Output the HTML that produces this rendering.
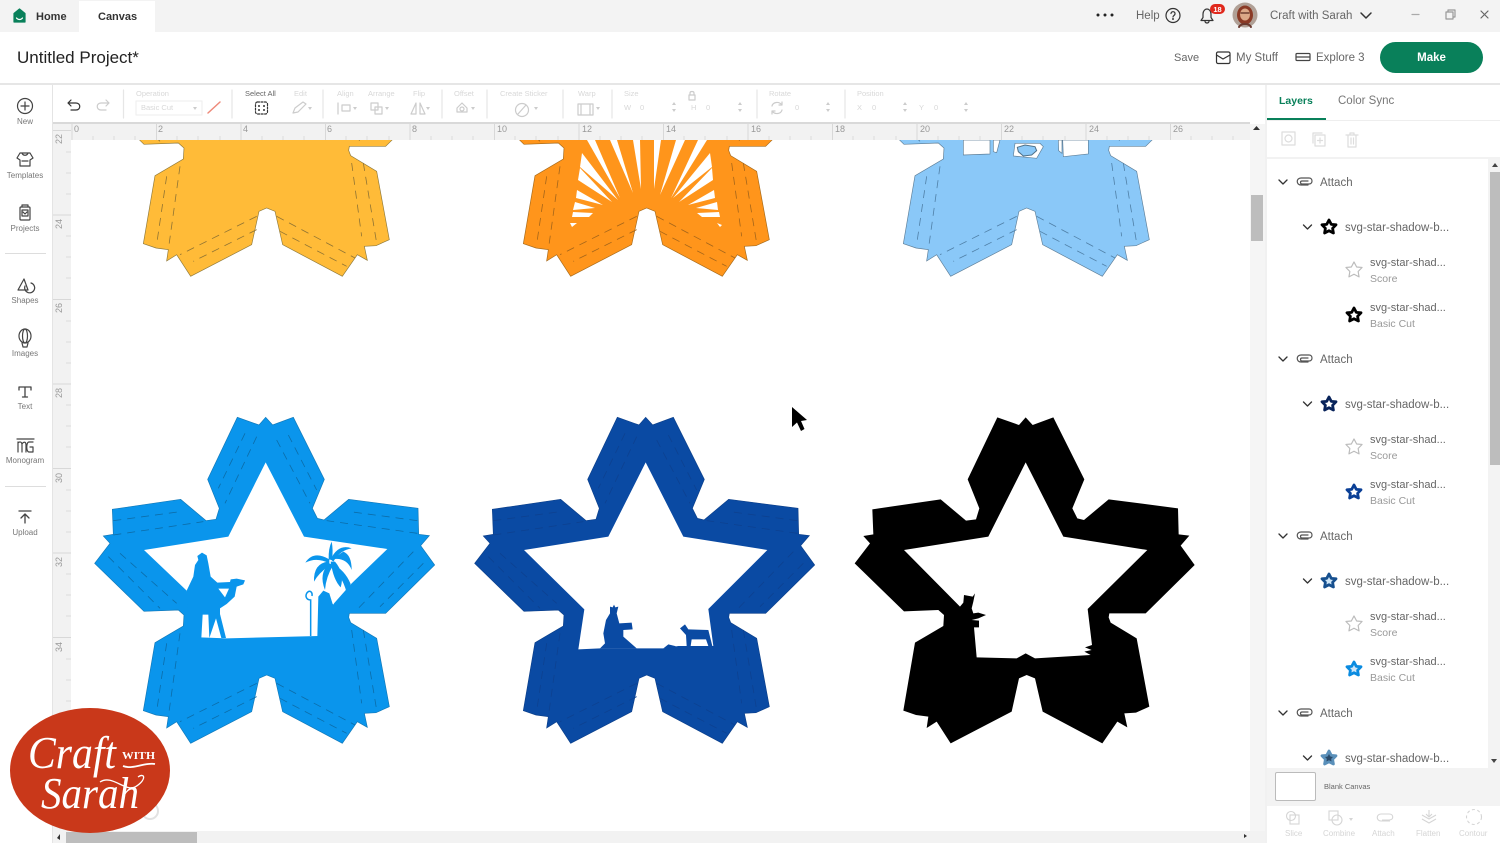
<!DOCTYPE html>
<html><head><meta charset="utf-8"><style>
html,body{margin:0;padding:0;width:1500px;height:843px;overflow:hidden;background:#fff;font-family:"Liberation Sans",sans-serif}
.b{position:absolute}
.t{position:absolute;white-space:nowrap;line-height:14px;color:#666}
.d{color:#d8d8d8;font-size:7.5px}
.s{color:#777;font-size:8px;width:50px;left:0;text-align:center}
.r{color:#999;font-size:9px}
.a{color:#666;font-size:11.5px;left:1320px}
.n{color:#666;font-size:11.5px;left:1345px}
.m{color:#666;font-size:11px;left:1370px}
.u{color:#999;font-size:10.5px;left:1370px}
.f{color:#d5d5d5;font-size:8px}
svg{position:absolute;left:0;top:0}
</style></head><body>
<svg width="1500" height="843" viewBox="0 0 1500 843">
<defs>
<path id="o" d="M557 52L578 75L640 52L733 238L697 325L712 355L732 360L806 298L1014 325L1016 403L1048 407L1022 437L1064 495L917 640L808 640L806 652L812 668L890 715L928 920L888 938L853 940L862 982L832 965L787 1030L608 935L585 835L560 825L537 835L515 935L332 1030L290 965L260 984L265 950L228 945L190 932L225 728L310 678L312 645L295 630L192 634L44 490L90 430L70 408L100 403L97 328L302 298L378 362L408 358L418 325L383 238L472 52L537 75Z"/>
<g id="l" fill="none" stroke-width="2.400" stroke-dasharray="24 18">
<path d="M495 100L415 265M530 110L435 310M590 120L690 310M625 105L710 270M100 362L300 335M100 405L370 365M1012 362L810 335M1012 400L740 362M85 470L240 625M120 460L290 610M1000 455L830 630M1030 490L900 620M260 730L232 920M300 700L265 950M815 690L845 910M850 690L890 930M530 850L300 965M530 890L340 985M590 850L825 975M600 895L800 1000"/>
</g>
</defs>
<!-- top row -->
<g transform="translate(80,-67) scale(.33333)"><use href="#o" fill="#ffbb38" stroke="#8f7a3c" stroke-width="2"/><use href="#l" stroke="#8f7333"/></g>
<g transform="translate(460,-67) scale(.33333)"><use href="#o" fill="#ff951b" stroke="#a56a1c" stroke-width="2"/><use href="#l" stroke="#a4651a"/></g>
<g fill="#fff">
<polygon points="587,140 595,140 620,198"/><polygon points="610,140 617,140 633,193"/><polygon points="633,140 640,140 641,189"/><polygon points="654,140 661,140 654,189"/><polygon points="676,140 685,140 660,195"/><polygon points="698,140 707,140 671,198"/>
<polygon points="582,153 580,167 618,200"/><polygon points="580,168 578,180 612,202"/><polygon points="577,190 576,198 603,205"/><polygon points="575,202 573,210 595,208"/><polygon points="573,212 572,217 589,217 593,213"/><polygon points="570,223 577,223 572,227"/>
<polygon points="710,153 712,167 673,198"/><polygon points="712,168 713,180 679,202"/><polygon points="714,190 715,198 688,205"/><polygon points="717,202 718,210 696,208"/><polygon points="719,212 720,217 702,217 697,213"/><polygon points="717,223 722,225 720,227"/>
</g>
<g transform="translate(840,-67) scale(.33333)"><use href="#o" fill="#8ac8f8" stroke="#5f7f98" stroke-width="2"/><use href="#l" stroke="#4f7fa6"/></g>
<g transform="translate(880,130) scale(.33333)">
<path d="M250 30L330 30L330 72L250 75ZM340 30L360 30L350 68L340 65ZM548 30L625 30L625 72L550 80ZM535 30L546 30L546 70L536 62ZM405 40L480 40L490 50L470 85L400 78Z" fill="#fff" stroke="#5f7f98" stroke-width="2"/>
<path d="M412 52L435 45L465 50L470 62L455 75L430 78L415 65Z" fill="#8ac8f8" stroke="#4f7087" stroke-width="3"/>
</g>
<!-- bottom row: mid blue -->
<g transform="translate(80,400) scale(.33333)">
<use href="#o" fill="#0a95ec" stroke="#1178b8" stroke-width="2"/><use href="#l" stroke="#0c6ca8"/>
<polygon points="557,187 672,410 922,447 815,550 762,610 720,700 715,708 440,715 360,712 320,572 192,450 445,410" fill="#fff"/>
<g fill="#0a95ec">
<path d="M352 468L366 458L380 466L385 490L392 530L412 548L450 546L452 538L470 536L495 541L490 553L470 560L464 590L440 612L420 625L420 642L438 714L424 714L408 655L388 714L385 644L368 644L364 714L358 714L352 690L322 640L320 572L340 530L345 495L355 480Z"/>
<path d="M748 478Q700 450 676 488Q710 470 748 490Z"/><path d="M745 485Q700 490 702 545Q715 520 750 495Z"/><path d="M748 490Q715 520 735 570Q738 530 760 495Z"/><path d="M752 485Q760 540 782 562Q795 520 765 485Z"/><path d="M755 478Q800 470 815 510Q815 465 790 455Z"/><path d="M752 478Q775 430 815 445Q780 450 760 485Z"/><path d="M746 478Q745 445 755 425Q760 450 756 480Z"/>
<path d="M755 490Q795 510 812 552L800 578Q785 520 745 495Z"/>
<path d="M712 712L715 590L730 572L748 580L758 612L805 640L808 720Z"/>
</g>
<path d="M692 708L692 600C680 600 675 590 680 580C688 568 698 575 696 588" fill="none" stroke="#0a95ec" stroke-width="4.500"/>
<polygon points="415,566 447,566 435,592" fill="#fff"/>
</g>
<!-- bottom row: dark blue -->
<g transform="translate(460,400) scale(.33333)">
<use href="#o" fill="#0a4aa3" stroke="#0b3f8a" stroke-width="2"/><use href="#l" stroke="#0d4190"/>
<polygon points="557,187 670,410 922,450 745,627 760,738 655,738 610,745 530,745 420,745 355,748 373,628 192,450 445,410" fill="#fff"/>
<path d="M450 620L458 622L462 614L466 622L475 620L470 640L478 670L515 668L518 688L490 690L490 710L530 745L420 745L435 730L430 700L438 660L450 640ZM610 745L625 733L645 738L660 745ZM660 685L675 673L685 688L745 690L757 738L745 738L738 718L695 718L692 738L680 738L678 705Z" fill="#0a4aa3"/>
</g>
<!-- bottom row: black -->
<g transform="translate(840,400) scale(.33333)">
<use href="#o" fill="#000"/>
<path d="M557 187L670 410L922 450L743 627L756 735L735 742L755 750L733 755L752 765L585 775L557 760L530 775L410 772L402 682L417 682L417 662L395 660L415 655L438 645L415 638L400 640L395 625L400 605L405 580L398 590L372 585L370 608L360 620L192 450L445 410Z" fill="#fff"/>
</g>
<!-- cursor -->
<path d="M792 407L792 427L797 422.500L801 431L804.500 429L801 421L807 420Z" fill="#000"/>
</svg>

<!-- rulers and scroll -->
<div class="b" style="left:53px;top:120px;width:1212px;height:4px;background:#d9d9d9"></div>
<div class="b" style="left:53px;top:124px;width:1197px;height:16px;background:#f2f2f2"></div>
<div class="b" style="left:53px;top:124px;width:18px;height:719px;background:#f2f2f2"></div>
<div class="b" style="left:1250px;top:124px;width:15px;height:719px;background:#f5f5f5"></div>
<div class="b" style="left:1251px;top:195px;width:12px;height:46px;background:#bdbdbd"></div>
<div class="b" style="left:53px;top:831px;width:1212px;height:12px;background:#f2f2f2"></div>
<div class="b" style="left:66px;top:832px;width:131px;height:11px;background:#bdbdbd"></div>
<svg width="1500" height="843" viewBox="0 0 1500 843">
<path d="M72 124V140M156.500 124V140M241 124V140M325.500 124V140M410 124V140M494.500 124V140M579 124V140M663.500 124V140M748 124V140M832.500 124V140M917 124V140M1001.500 124V140M1086 124V140M1170.500 124V140M53 130.500H71M53 215H71M53 299.500H71M53 384H71M53 468.500H71M53 553H71M53 637.500H71M53 722H71" stroke="#d8d8d8" stroke-width="1"/>
<path d="M93 136V140M114 136V140M135 136V140M177 136V140M198 136V140M220 136V140M262 136V140M283 136V140M304 136V140M346 136V140M367 136V140M389 136V140M431 136V140M452 136V140M473 136V140M515 136V140M536 136V140M558 136V140M600 136V140M621 136V140M642 136V140M684 136V140M705 136V140M727 136V140M769 136V140M790 136V140M811 136V140M853 136V140M874 136V140M896 136V140M938 136V140M959 136V140M980 136V140M1022 136V140M1043 136V140M1065 136V140M1107 136V140M1128 136V140M1149 136V140M1191 136V140M1212 136V140M1233 136V140" stroke="#dcdcdc"/>
<path d="M66 152H71M66 173H71M66 194H71M66 236H71M66 257H71M66 278H71M66 321H71M66 342H71M66 363H71M66 405H71M66 426H71M66 447H71M66 490H71M66 511H71M66 532H71M66 574H71M66 595H71M66 616H71M66 659H71M66 680H71M66 701H71M66 743H71M66 764H71M66 785H71" stroke="#dcdcdc"/>
<path d="M1253 130L1260 130L1256.500 126ZM1244 838L1244 834L1247 836ZM57 838L60 834L60 840Z" fill="#333"/>
</svg>
<div class="t r" style="left:74px;top:122px">0</div><div class="t r" style="left:158px;top:122px">2</div><div class="t r" style="left:243px;top:122px">4</div><div class="t r" style="left:327px;top:122px">6</div><div class="t r" style="left:412px;top:122px">8</div><div class="t r" style="left:497px;top:122px">10</div><div class="t r" style="left:582px;top:122px">12</div><div class="t r" style="left:666px;top:122px">14</div><div class="t r" style="left:751px;top:122px">16</div><div class="t r" style="left:835px;top:122px">18</div><div class="t r" style="left:920px;top:122px">20</div><div class="t r" style="left:1004px;top:122px">22</div><div class="t r" style="left:1089px;top:122px">24</div><div class="t r" style="left:1173px;top:122px">26</div>
<div class="t r" style="left:52px;top:132px;width:14px;text-align:center;transform:rotate(-90deg)">22</div><div class="t r" style="left:52px;top:217px;width:14px;text-align:center;transform:rotate(-90deg)">24</div><div class="t r" style="left:52px;top:301px;width:14px;text-align:center;transform:rotate(-90deg)">26</div><div class="t r" style="left:52px;top:386px;width:14px;text-align:center;transform:rotate(-90deg)">28</div><div class="t r" style="left:52px;top:471px;width:14px;text-align:center;transform:rotate(-90deg)">30</div><div class="t r" style="left:52px;top:555px;width:14px;text-align:center;transform:rotate(-90deg)">32</div><div class="t r" style="left:52px;top:640px;width:14px;text-align:center;transform:rotate(-90deg)">34</div>

<!-- top bars -->
<div class="b" style="left:0;top:0;width:1500px;height:32px;background:#f3f3f3"></div>
<div class="b" style="left:79px;top:1px;width:76px;height:31px;background:#fff"></div>
<div class="b" style="left:0;top:32px;width:1500px;height:51px;background:#fff"></div>
<div class="b" style="left:0;top:83px;width:1500px;height:2px;background:#e6e6e6"></div>
<div class="b" style="left:53px;top:85px;width:1212px;height:37px;background:#fff"></div>
<div class="b" style="left:53px;top:122px;width:1197px;height:2px;background:#d9d9d9"></div>
<div class="b" style="left:1250px;top:122px;width:15px;height:2px;background:#fff"></div>
<div class="b" style="left:0;top:85px;width:52px;height:758px;background:#fff;border-right:1px solid #e4e4e4"></div>
<div class="b" style="left:5px;top:253px;width:41px;height:1px;background:#ddd"></div>
<div class="b" style="left:5px;top:486px;width:41px;height:1px;background:#ddd"></div>

<div class="t" style="left:36px;top:10px;font-size:11px;font-weight:bold;color:#333">Home</div>
<div class="t" style="left:98px;top:10px;font-size:11px;font-weight:bold;color:#333">Canvas</div>
<div class="t" style="left:17px;top:50px;font-size:17px;color:#222;line-height:15px">Untitled Project*</div>
<div class="t" style="left:1136px;top:9px;font-size:11.500px;color:#666">Help</div>
<div class="t" style="left:1270px;top:9px;font-size:11.500px;color:#666">Craft with Sarah</div>
<div class="t" style="left:1174px;top:51px;font-size:11px;color:#666">Save</div>
<div class="t" style="left:1236px;top:51px;font-size:11.500px;color:#666">My Stuff</div>
<div class="t" style="left:1316px;top:51px;font-size:11.500px;color:#666">Explore 3</div>
<div class="b" style="left:1380px;top:42px;width:103px;height:31px;border-radius:16px;background:#09805a"></div>
<div class="t" style="left:1380px;top:51px;width:103px;text-align:center;font-size:11.500px;font-weight:bold;color:#fff">Make</div>

<!-- toolbar text -->
<div class="t d" style="left:136px;top:87px">Operation</div><div class="t d" style="left:141px;top:101px">Basic Cut</div>
<div class="t" style="left:245px;top:87px;font-size:7.500px;color:#666">Select All</div>
<div class="t d" style="left:294px;top:87px">Edit</div><div class="t d" style="left:337px;top:87px">Align</div><div class="t d" style="left:368px;top:87px">Arrange</div><div class="t d" style="left:413px;top:87px">Flip</div><div class="t d" style="left:454px;top:87px">Offset</div><div class="t d" style="left:500px;top:87px">Create Sticker</div><div class="t d" style="left:578px;top:87px">Warp</div><div class="t d" style="left:624px;top:87px">Size</div><div class="t d" style="left:769px;top:87px">Rotate</div><div class="t d" style="left:857px;top:87px">Position</div>
<div class="t d" style="left:624px;top:101px">W</div><div class="t d" style="left:640px;top:101px">0</div><div class="t d" style="left:691px;top:101px">H</div><div class="t d" style="left:706px;top:101px">0</div><div class="t d" style="left:795px;top:101px">0</div><div class="t d" style="left:857px;top:101px">X</div><div class="t d" style="left:872px;top:101px">0</div><div class="t d" style="left:919px;top:101px">Y</div><div class="t d" style="left:934px;top:101px">0</div>

<!-- sidebar labels -->
<div class="t s" style="top:115px">New</div><div class="t s" style="top:169px">Templates</div><div class="t s" style="top:222px">Projects</div><div class="t s" style="top:294px">Shapes</div><div class="t s" style="top:347px">Images</div><div class="t s" style="top:400px">Text</div><div class="t s" style="top:454px">Monogram</div><div class="t s" style="top:526px">Upload</div>

<!-- right panel -->
<div class="b" style="left:1265px;top:85px;width:235px;height:758px;background:#fff"></div>
<div class="b" style="left:1265px;top:85px;width:2px;height:758px;background:#f1f1f1"></div>
<div class="b" style="left:1267px;top:118px;width:59px;height:2px;background:#09805a"></div>
<div class="b" style="left:1267px;top:120px;width:233px;height:1px;background:#eee"></div>
<div class="b" style="left:1267px;top:157px;width:233px;height:2px;background:#f2f2f2"></div>
<div class="t" style="left:1279px;top:94px;font-size:10.500px;font-weight:bold;color:#09805a">Layers</div>
<div class="t" style="left:1338px;top:94px;font-size:11.500px;color:#777">Color Sync</div>
<div class="b" style="left:1488px;top:159px;width:12px;height:609px;background:#f3f3f3"></div>
<div class="b" style="left:1490px;top:172px;width:10px;height:293px;background:#bdbdbd"></div>

<div class="t a" style="top:176px">Attach</div><div class="t n" style="top:221px">svg-star-shadow-b...</div><div class="t m" style="top:256px">svg-star-shad...</div><div class="t u" style="top:272px">Score</div><div class="t m" style="top:301px">svg-star-shad...</div><div class="t u" style="top:317px">Basic Cut</div>
<div class="t a" style="top:353px">Attach</div><div class="t n" style="top:398px">svg-star-shadow-b...</div><div class="t m" style="top:433px">svg-star-shad...</div><div class="t u" style="top:449px">Score</div><div class="t m" style="top:478px">svg-star-shad...</div><div class="t u" style="top:494px">Basic Cut</div>
<div class="t a" style="top:530px">Attach</div><div class="t n" style="top:575px">svg-star-shadow-b...</div><div class="t m" style="top:610px">svg-star-shad...</div><div class="t u" style="top:626px">Score</div><div class="t m" style="top:655px">svg-star-shad...</div><div class="t u" style="top:671px">Basic Cut</div>
<div class="t a" style="top:707px">Attach</div><div class="t n" style="top:752px">svg-star-shadow-b...</div>

<div class="t f" style="left:1285px;top:827px">Slice</div><div class="t f" style="left:1323px;top:827px">Combine</div><div class="t f" style="left:1372px;top:827px">Attach</div><div class="t f" style="left:1416px;top:827px">Flatten</div><div class="t f" style="left:1459px;top:827px">Contour</div>

<!-- icons -->
<svg width="1500" height="843" viewBox="0 0 1500 843" fill="none" stroke="#444" stroke-width="1.200" stroke-linecap="round" stroke-linejoin="round">
<defs><path id="st" d="M0 -7L2.300 -2.600L7 -2.200L3.600 1.300L4.400 6L0 3.700L-4.400 6L-3.600 1.300L-7 -2.200L-2.300 -2.600Z"/></defs>
<path d="M19.500 10L25 14.500V23H14V14.500Z" fill="#09805a" stroke="#09805a" transform="translate(0,-1)"/><path d="M16.500 18C18 20 21 20 22.500 18" stroke="#fff"/>
<g fill="#222" stroke="none"><circle cx="1098" cy="15" r="1.500"/><circle cx="1105" cy="15" r="1.500"/><circle cx="1112" cy="15" r="1.500"/></g>
<circle cx="1173" cy="15.500" r="7" stroke="#333"/><path d="M1171 13.500C1171 11 1175.500 11 1175 14C1174.800 15.500 1173 15.500 1173 17" stroke="#333"/><circle cx="1173" cy="19" r=".4" stroke="#333"/>
<path d="M1201 20.500H1213L1211 17.500V14C1211 11 1209 9 1207 9C1205 9 1203 11 1203 14V17.500ZM1205 21.500C1205.500 23.500 1208.500 23.500 1209 21.500" stroke="#333"/>
<rect x="1210" y="4" width="15" height="10" rx="5" fill="#e0281c" stroke="none"/>
<text x="1217.500" y="12" font-size="7.500" font-family="Liberation Sans, sans-serif" font-weight="bold" fill="#fff" stroke="none" text-anchor="middle">18</text>
<circle cx="1245" cy="15" r="12.500" fill="#b0a096" stroke="none"/><ellipse cx="1245" cy="15" rx="8" ry="9.500" fill="#8a3a26" stroke="none"/><ellipse cx="1245" cy="14.500" rx="5" ry="6" fill="#dca888" stroke="none"/><path d="M1241 13H1249" stroke="#5a2a20"/><path d="M1239 27C1241 23 1249 23 1251 27" stroke="#6a3a30" stroke-width="2"/>
<path d="M1361 13L1366 18L1371 13" stroke="#333" stroke-width="1.500"/>
<path d="M1412 14.500H1419" stroke="#aaa"/><path d="M1446 12H1453V19H1446ZM1448 12V10H1455V17H1453" stroke="#999"/><path d="M1481 11L1488 18M1488 11L1481 18" stroke="#666"/>
<rect x="1216.500" y="52" width="13.500" height="11.500" rx="1.500" stroke="#333"/><path d="M1216.500 55L1223 59L1230 55" stroke="#333"/>
<rect x="1296" y="53.500" width="14" height="7" rx="1" stroke="#444"/><path d="M1296 57H1310" stroke="#444"/>
<path d="M123.500 90V118M232 90V118M323 90V118M442 90V118M487 90V118M563 90V118M612 90V118M757 90V118M845 90V118" stroke="#e6e6e6"/>
<path d="M71 100L68 103L71 106M68 103H76C81 103 81 110 76 110H71" stroke="#333"/>
<path d="M106 100L109 103L106 106M109 103H101C96 103 96 110 101 110H106" stroke="#ccc"/>
<rect x="136" y="101" width="66" height="14" stroke="#f0f0f0"/><path d="M193 107L197 107L195 110Z" fill="#ccc" stroke="none"/>
<path d="M208 113L220 102" stroke="#ee8a7a" stroke-width="1.500"/>
<rect x="255.500" y="102" width="12" height="12" rx="2" stroke="#333" stroke-dasharray="2 1.500"/><g fill="#333" stroke="none"><circle cx="259" cy="106" r="1"/><circle cx="264" cy="106" r="1"/><circle cx="259" cy="110" r="1"/><circle cx="264" cy="110" r="1"/></g>
<g stroke="#ccc"><path d="M293 113L295 108L303 102L306 104L298 112Z"/><path d="M338 103V114M342 105H350V111H342ZM371 103H378V110H371ZM375 107H382V114H375ZM411 114L416 103V114ZM420 114L420 103L425 114ZM457 108L462 103L467 108V112H457Z"/><circle cx="462" cy="109" r="2"/><circle cx="522" cy="110" r="6.500"/><path d="M518 114L526 105"/><path d="M578 104H593V115H578ZM581 104V115M590 104V115"/><rect x="689" y="95" width="6" height="5"/><path d="M690 95V93C690 91 694 91 694 93V95"/><path d="M772 106C773 102 779 101 782 105M782 110C781 114 775 115 772 111M782 102V105H779M772 114V111H775"/></g>
<g fill="#ccc" stroke="none"><path d="M308 107H312L310 110ZM353 107H357L355 110ZM385 107H389L387 110ZM426 107H430L428 110ZM471 107H475L473 110ZM534 107H538L536 110ZM596 107H600L598 110ZM672 105L676 105L674 102ZM672 109L676 109L674 112ZM738 105L742 105L740 102ZM738 109L742 109L740 112ZM826 105L830 105L828 102ZM826 109L830 109L828 112ZM903 105L907 105L905 102ZM903 109L907 109L905 112ZM964 105L968 105L966 102ZM964 109L968 109L966 112Z"/></g>
<circle cx="25" cy="106" r="7.500"/><path d="M25 102V110M21 106H29"/>
<path d="M20 153H30L33 158L30 160V166H20V160L17 158ZM22 153C23 156 27 156 28 153M22 161H28"/>
<rect x="20" y="207" width="10" height="13" rx="1"/><path d="M22 207V205H28V207M22 210H28V216H22ZM25 214L23 212M25 214L27 212"/>
<path d="M24 279L18 290H28ZM25 286a5 5 0 1 0 6 -3"/>
<ellipse cx="25" cy="336" rx="6" ry="7"/><ellipse cx="25" cy="336" rx="2.500" ry="7"/><path d="M22 343L23 347H27L28 343"/>
<path d="M19 390V387H31V390M25 387V397M22.500 397H27.500" stroke-width="1.300"/>
<path d="M17 439H34M18 442V452M18 443C20 441 22 442 22 445V452M22 444C24 441 26 442 26 445V452M33 442H29C26 442 26 452 29 452H33V447H30"/>
<path d="M19 511H31M25 523V515M21 518L25 514L29 518" stroke-width="1.300"/>
<g stroke="#ddd"><rect x="1282" y="132" width="13" height="13"/><circle cx="1288.500" cy="138.500" r="3.500"/><rect x="1315" y="135" width="10" height="11"/><path d="M1313 143V133H1322M1320 138V143M1317.500 140.500H1322.500"/><path d="M1346 135H1358M1348 135V147H1356V135M1350 135V133H1354V135M1351 138V144M1353.500 138V144"/></g>
<g stroke="#333" stroke-width="1.300"><path d="M1279 180L1283 184L1287 180M1303.500 225L1307.500 229L1311.500 225M1279 357L1283 361L1287 357M1303.500 402L1307.500 406L1311.500 402M1279 534L1283 538L1287 534M1303.500 579L1307.500 583L1311.500 579M1279 711L1283 715L1287 711M1303.500 756L1307.500 760L1311.500 756"/></g>
<g stroke="#555"><path d="M1308 185H1301C1296 185 1296 178 1301 178H1309C1313 178 1313 184 1309 184H1302C1300 184 1300 181 1302 181H1308"/><path d="M1308 362H1301C1296 362 1296 355 1301 355H1309C1313 355 1313 361 1309 361H1302C1300 361 1300 358 1302 358H1308"/><path d="M1308 539H1301C1296 539 1296 532 1301 532H1309C1313 532 1313 538 1309 538H1302C1300 538 1300 535 1302 535H1308"/><path d="M1308 716H1301C1296 716 1296 709 1301 709H1309C1313 709 1313 715 1309 715H1302C1300 715 1300 712 1302 712H1308"/></g>
<use href="#st" transform="translate(1329,227)" stroke="#000" stroke-width="2.800" fill="#fff"/>
<use href="#st" transform="translate(1354,270) scale(1.150)" stroke="#bbb" stroke-width="1" fill="#fff"/>
<use href="#st" transform="translate(1354,315)" stroke="#000" stroke-width="2.800" fill="#fff"/>
<use href="#st" transform="translate(1329,404)" stroke="#08235a" stroke-width="2.800" fill="#fff"/>
<use href="#st" transform="translate(1354,447) scale(1.150)" stroke="#bbb" stroke-width="1" fill="#fff"/>
<use href="#st" transform="translate(1354,492)" stroke="#0a3f96" stroke-width="2.800" fill="#fff"/>
<use href="#st" transform="translate(1329,581)" stroke="#17508f" stroke-width="2.800" fill="#cfe6f8"/>
<use href="#st" transform="translate(1354,624) scale(1.150)" stroke="#bbb" stroke-width="1" fill="#fff"/>
<use href="#st" transform="translate(1354,669)" stroke="#0a8be0" stroke-width="2.800" fill="#cfe6f8"/>
<use href="#st" transform="translate(1329,758)" stroke="#5a90ba" stroke-width="2.800" fill="#2a4a6a"/>
<path d="M1492 167H1498L1495 163ZM1491 759H1497L1494 763Z" fill="#444" stroke="none"/>
</svg>
<div class="b" style="left:1267px;top:768px;width:233px;height:38px;background:#f3f3f3"></div>
<div class="b" style="left:1275px;top:772px;width:41px;height:29px;background:#fff;border:1px solid #bbb;box-sizing:border-box;border-radius:2px"></div>
<div class="t" style="left:1324px;top:780px;font-size:7.500px;color:#666">Blank Canvas</div>
<svg width="1500" height="843" viewBox="0 0 1500 843" fill="none" stroke="#d5d5d5" stroke-width="1.100">
<circle cx="1291" cy="816" r="4.500"/><rect x="1290" y="815" width="9" height="9"/>
<rect x="1329" y="811" width="9" height="9"/><circle cx="1337" cy="820" r="5"/><path d="M1349 818H1353L1351 821Z" fill="#d5d5d5" stroke="none"/>
<path d="M1390 821H1381C1376 821 1376 814 1381 814H1389C1394 814 1394 820 1389 820H1382"/>
<path d="M1429 810V816M1426 814L1429 817L1432 814M1422 815L1429 819L1436 815M1422 819L1429 823L1436 819"/>
<circle cx="1474" cy="817" r="7.500" stroke-dasharray="3 2.500"/>
</svg>

<!-- logo -->
<svg width="1500" height="843" viewBox="0 0 1500 843">
<circle cx="150" cy="811" r="8" fill="none" stroke="#e2e2e2" stroke-width="2"/>
<ellipse cx="90" cy="770.500" rx="80" ry="62.500" fill="#c9381a"/>
<text x="28" y="768" font-family="Liberation Serif, serif" font-style="italic" font-size="46" fill="#fff" textLength="88" lengthAdjust="spacingAndGlyphs">Craft</text>
<text x="122" y="759" font-family="Liberation Serif, serif" font-weight="bold" font-size="10" fill="#fff" textLength="33" lengthAdjust="spacingAndGlyphs">WITH</text>
<path d="M123 766C133 770 145 762 155 764" fill="none" stroke="#fff" stroke-width="1.800"/>
<text x="41" y="808" font-family="Liberation Serif, serif" font-style="italic" font-size="44" fill="#fff" textLength="98" lengthAdjust="spacingAndGlyphs">Sarah</text>
<path d="M100 782C112 774 125 792 135 787C147 780 145 772 138 777" fill="none" stroke="#fff" stroke-width="1.300"/>
</svg>
</body></html>
